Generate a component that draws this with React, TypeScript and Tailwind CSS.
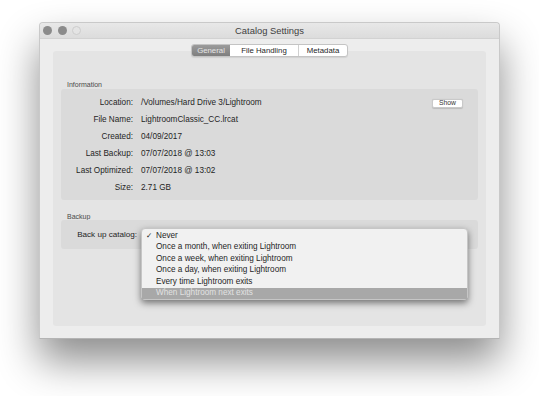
import React from "react";

const infoRows = [
  { label: "Location:", value: "/Volumes/Hard Drive 3/Lightroom", show: true },
  { label: "File Name:", value: "LightroomClassic_CC.lrcat" },
  { label: "Created:", value: "04/09/2017" },
  { label: "Last Backup:", value: "07/07/2018 @ 13:03" },
  { label: "Last Optimized:", value: "07/07/2018 @ 13:02" },
  { label: "Size:", value: "2.71 GB" },
];

const backupOptions = [
  "Never",
  "Once a month, when exiting Lightroom",
  "Once a week, when exiting Lightroom",
  "Once a day, when exiting Lightroom",
  "Every time Lightroom exits",
  "When Lightroom next exits",
];

const tabs = [
  { name: "General", width: "w-[38px]", active: true },
  { name: "File Handling", width: "w-[68px]" },
  { name: "Metadata", width: "w-[49px]" },
];

export default function App() {
  return (
    <div className="w-[539px] h-[396px] bg-white pt-[22px] pl-[39px] overflow-hidden font-['Liberation_Sans',Arial,sans-serif] text-[#1f1f1f]">
      <div className="w-[461px] h-[317px] flex flex-col bg-[#ededed] rounded-t-[4px] border border-[#c9c9c9] border-b-[#b4b4b4] shadow-[0_22px_40px_rgba(0,0,0,0.45)]">
        {/* title bar */}
        <div className="h-[16px] shrink-0 grid grid-cols-[1fr_auto_1fr] items-center bg-gradient-to-b from-[#e8e8e8] to-[#dcdcdc] border-b border-[#d2d2d2] rounded-t-[4px]">
          <div className="flex items-center gap-[5.5px] pl-[3px]">
            <span className="w-[9px] h-[9px] rounded-full bg-[#8b8b8b]" />
            <span className="w-[9px] h-[9px] rounded-full bg-[#8b8b8b]" />
            <span className="w-[9px] h-[9px] rounded-full bg-[#e4e4e4] border border-[#cdcdcd]" />
          </div>
          <div className="text-[9.4px] leading-none text-[#404040]">Catalog Settings</div>
          <div />
        </div>

        {/* body */}
        <div className="flex-1 flex flex-col px-[13px] pt-[5px] pb-[13px]">
          <div className="relative z-10 flex justify-center">
            <div className="flex h-[13px] rounded-[3px] border border-[#c4c4c4] bg-white overflow-hidden shadow-[0_1px_1px_rgba(0,0,0,0.08)]">
              {tabs.map((t, i) => (
                <div
                  key={t.name}
                  className={
                    "flex items-center justify-center text-[7.8px] leading-none " +
                    t.width +
                    (t.active
                      ? " bg-gradient-to-b from-[#9b9b9b] to-[#7f7f7f] text-[#e6e6e6]"
                      : " text-[#1f1f1f]") +
                    (i === 2 ? " border-l border-[#d0d0d0]" : "")
                  }
                >
                  {t.name}
                </div>
              ))}
            </div>
          </div>

          <div className="-mt-[6px] h-[275px] bg-[#e4e4e4] rounded-[3px] px-[8px] pt-[30px]">
            <div className="pl-[6px] h-[7px] leading-[7px] text-[7px] text-[#4a4a4a]">Information</div>
            <div className="mt-[1px] bg-[#dadada] rounded-[3px] pt-[6px] pb-[3px] pr-[15px]">
              {infoRows.map((r) => (
                <div key={r.label} className="h-[17px] flex items-center text-[8.2px]">
                  <span className="w-[72px] text-right">{r.label}</span>
                  <span className="ml-[8px] flex-1">{r.value}</span>
                  {r.show && (
                    <span className="w-[31px] h-[9px] flex items-center justify-center bg-white border border-[#c9c9c9] rounded-[2px] text-[6.8px] text-[#333] shadow-[0_0.5px_1px_rgba(0,0,0,0.15)]">
                      Show
                    </span>
                  )}
                </div>
              ))}
            </div>

            <div className="mt-[13px] pl-[6px] h-[7px] leading-[7px] text-[7px] text-[#4a4a4a]">Backup</div>
            <div className="relative h-[29px] bg-[#dadada] rounded-[3px] flex items-center">
              <span className="w-[76px] text-right text-[8.1px] mt-[1px]">Back up catalog:</span>
              <div className="absolute left-[80px] top-[8px] w-[327px] h-[72px] bg-[#f1f1f1] rounded-[4px] border border-[#c6c6c6] shadow-[0_3px_7px_rgba(0,0,0,0.5)] pt-[1px]">
                {backupOptions.map((o, i) => {
                  const hi = i === backupOptions.length - 1;
                  return (
                    <div
                      key={o}
                      className={
                        "h-[11.5px] flex items-center text-[8.2px] " +
                        (hi ? "bg-[#a8a8a8] text-[#e2e2e2]" : "text-[#1f1f1f]")
                      }
                    >
                      <span className="w-[14px] pl-[4px] text-[7.5px] font-bold font-['DejaVu_Sans',sans-serif]">
                        {i === 0 ? "✓" : ""}
                      </span>
                      <span>{o}</span>
                    </div>
                  );
                })}
              </div>
            </div>
          </div>
        </div>
      </div>
    </div>
  );
}
